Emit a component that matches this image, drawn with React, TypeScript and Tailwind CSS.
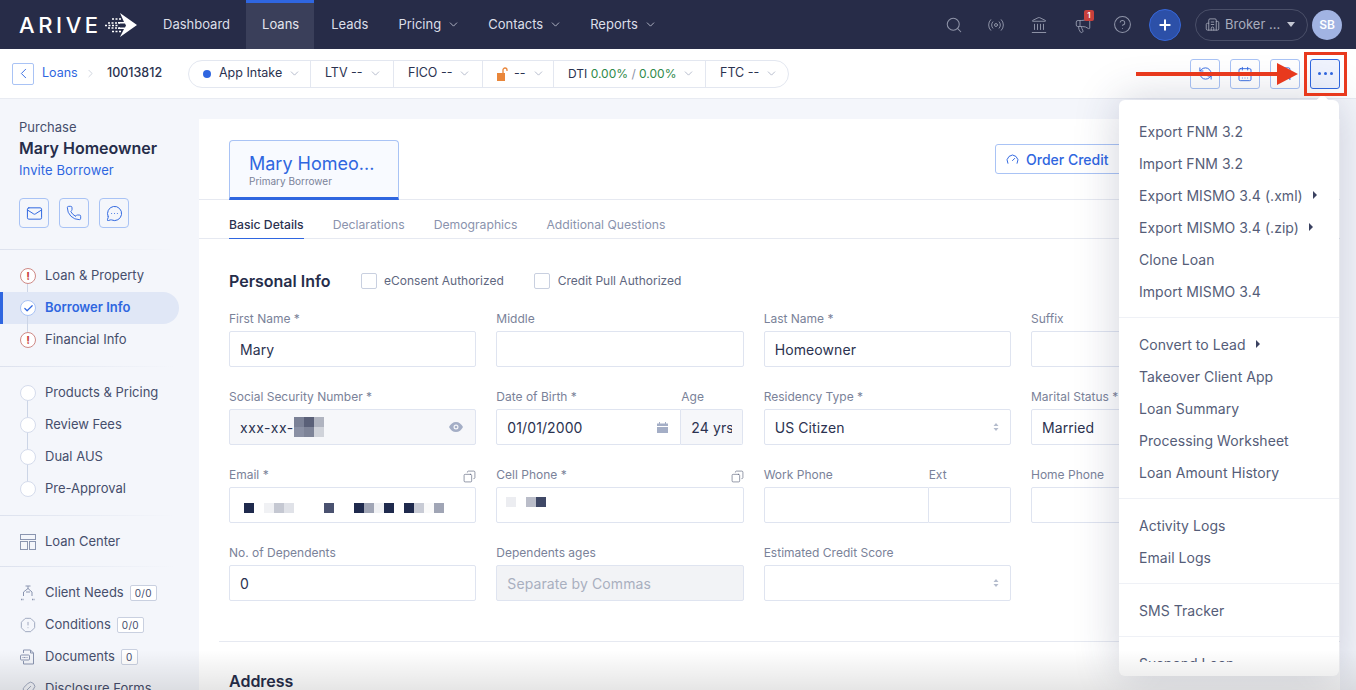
import React from "react";
import {
  Search,
  Radio,
  Landmark,
  Megaphone,
  CircleHelp,
  Plus,
  Building2,
  ChevronDown,
  ChevronLeft,
  ChevronRight,
  Mail,
  Phone,
  MessageCircleMore,
  Check,
  OctagonAlert,
  Feather,
  Copy,
  RefreshCcw,
  Bookmark,
  CalendarDays,
  Gauge,
} from "lucide-react";

const navItems = [
  { label: "Dashboard", cls: "px-[15px] pr-[16px]" },
  { label: "Loans", active: true, cls: "pl-[16px] pr-[15px]" },
  { label: "Leads", cls: "ml-[2px] px-[15px]" },
  { label: "Pricing", menu: true, cls: "pl-[15px] pr-[13px]" },
  { label: "Contacts", menu: true, cls: "pl-[15px] pr-[13px]" },
  { label: "Reports", menu: true, cls: "pl-[15px] pr-[13px]" },
];

const menuGroups = [
  [
    { label: "Export FNM 3.2" },
    { label: "Import FNM 3.2" },
    { label: "Export MISMO 3.4 (.xml)", sub: true },
    { label: "Export MISMO 3.4 (.zip)", sub: true },
    { label: "Clone Loan" },
    { label: "Import MISMO 3.4" },
  ],
  [
    { label: "Convert to Lead", sub: true },
    { label: "Takeover Client App" },
    { label: "Loan Summary" },
    { label: "Processing Worksheet" },
    { label: "Loan Amount History" },
  ],
  [{ label: "Activity Logs" }, { label: "Email Logs" }],
  [{ label: "SMS Tracker" }],
  [{ label: "Suspend Loan" }],
];

const Logo = () => (
  <div className="flex items-center w-[148px] pl-[19px]">
    <span className="text-[22px] font-medium tracking-[3.6px] text-white leading-none">ARIVE</span>
    <svg width="34" height="26" viewBox="0 0 34 26" className="ml-[2px]">
      <path d="M16 1l17 12-17 12 4-8h-6v-1.500h7l1-2-1-2h-7V10h6z" fill="#fff" />
      <path
        d="M8 7h9M4 11h12M1 13.500h14M4 16h12M8 19.500h9"
        stroke="#fff"
        strokeWidth="1.500"
        strokeDasharray="2 1.500"
      />
    </svg>
  </div>
);

const TopBar = () => (
  <header className="flex items-stretch h-[49px] bg-[#272c48] shrink-0">
    <Logo />
    {navItems.map((item) => (
      <div
        key={item.label}
        className={`flex items-center gap-[6px] text-[13px] border-t-[3px] pb-[3px] ${item.cls} ${
          item.active ? "bg-[#3a3f5a] border-[#2f66e0] text-[#e4e6ee]" : "border-transparent text-[#dcdfe8]"
        }`}
      >
        {item.label}
        {item.menu && <ChevronDown size={13} strokeWidth={1.5} className="text-[#c9cdda]" />}
      </div>
    ))}
    <div className="ml-auto flex items-center text-[#8f94a8] pr-[14px]">
      <Search size={18} strokeWidth={1.4} className="mr-[24px]" />
      <Radio size={18} strokeWidth={1.3} className="mr-[25px]" />
      <Landmark size={18} strokeWidth={1.3} className="mr-[26px]" />
      <div className="relative mr-[21px]">
        <Megaphone size={18} strokeWidth={1.3} />
        <span className="absolute -top-[6px] left-[10px] w-[10px] h-[11px] rounded-[2px] bg-[#c8403c] text-white text-[8px] font-semibold leading-[11px] text-center">
          1
        </span>
      </div>
      <CircleHelp size={19} strokeWidth={1.3} className="mr-[17px]" />
      <div className="w-[32px] h-[32px] rounded-full bg-[#2c50a8] border border-[#3767d8] flex items-center justify-center mr-[14px]">
        <Plus size={16} strokeWidth={3} className="text-white" />
      </div>
      <div className="flex items-center w-[113px] h-[32px] rounded-full border border-[#4a4f68] pl-[9px] text-[13px] text-[#a9adbd] mr-[4px]">
        <Building2 size={15} strokeWidth={1.3} className="mr-[5px]" />
        Broker ...
        <span className="ml-[7px] w-0 h-0 border-l-[4px] border-r-[4px] border-t-[5px] border-l-transparent border-r-transparent border-t-[#c4c7d3]" />
      </div>
      <div className="w-[30px] h-[30px] rounded-full bg-[#a1b3e2] flex items-center justify-center text-white text-[12px] font-semibold">
        SB
      </div>
    </div>
  </header>
);

const PillPart = ({ width, last, children }: { width: string; last?: boolean; children: React.ReactNode }) => (
  <div className={`flex items-center gap-[6px] pl-[14px] text-[12.5px] whitespace-nowrap text-[#2b3250] h-full ${width} ${last ? "" : "border-r border-[#e3e7f0]"}`}>
    {children}
    <ChevronDown size={13} strokeWidth={1.3} className="text-[#9aa2b8]" />
  </div>
);

const ActionBtn = ({ active, children }: { active?: boolean; children: React.ReactNode }) => (
  <div
    className={`w-[30px] h-[30px] rounded-[3px] border flex items-center justify-center text-[#2f66e0] ${
      active ? "border-[#2f66e0] bg-[#eff3fe]" : "border-[#a9c3f5] bg-white"
    }`}
  >
    {children}
  </div>
);

const SubBar = () => (
  <div className="flex items-center h-[50px] bg-white border-b border-[#e8ebf2] pl-[12px] pr-[16px] shrink-0">
    <div className="w-[22px] h-[22px] rounded-[2px] border border-[#a9c3f5] flex items-center justify-center text-[#2f66e0]">
      <ChevronLeft size={17} strokeWidth={1.3} />
    </div>
    <span className="ml-[8px] w-[35px] text-[12.5px] text-[#2f66e0]">Loans</span>
    <ChevronRight size={13} strokeWidth={1.2} className="ml-[7px] text-[#b8bfce]" />
    <span className="ml-[10px] w-[55px] whitespace-nowrap text-[12.5px] font-medium text-[#2b3250]">10013812</span>
    <div className="ml-[26px] flex items-center h-[28px] w-[601px] rounded-full border border-[#e3e7f0]">
      <PillPart width="w-[122px]">
        <span className="w-[8px] h-[8px] rounded-full bg-[#2f66e0] mr-[2px]" />
        App Intake
      </PillPart>
      <PillPart width="w-[83px]">LTV --</PillPart>
      <PillPart width="w-[89px]">FICO --</PillPart>
      <PillPart width="w-[71px]">
        <svg width="11" height="14" viewBox="0 0 11 14" fill="none">
          <rect x="0" y="6" width="8" height="8" fill="#e9863a" />
          <path d="M6 6V3a2 2 0 014 0v1" stroke="#e9863a" strokeWidth="1.300" />
        </svg>
        --
      </PillPart>
      <PillPart width="w-[152px]">
        <span className="text-[12px]">
          DTI <span className="text-[#2f8a4a]">0.00%</span> <span className="text-[#8a92a8]">/</span>{" "}
          <span className="text-[#2f8a4a]">0.00%</span>
        </span>
      </PillPart>
      <PillPart width="w-[82px]" last>
        FTC --
      </PillPart>
    </div>
    <div className="ml-auto flex items-center gap-[10px]">
      <ActionBtn>
        <RefreshCcw size={15} strokeWidth={1.5} />
      </ActionBtn>
      <ActionBtn>
        <CalendarDays size={16} strokeWidth={1.4} />
      </ActionBtn>
      <ActionBtn>
        <Bookmark size={15} strokeWidth={1.5} />
      </ActionBtn>
      <ActionBtn active>
        <span className="flex gap-[3px]">
          <i className="w-[3px] h-[3px] rounded-full bg-[#2f66e0]" />
          <i className="w-[3px] h-[3px] rounded-full bg-[#2f66e0]" />
          <i className="w-[3px] h-[3px] rounded-full bg-[#2f66e0]" />
        </span>
      </ActionBtn>
    </div>
  </div>
);

const SideDivider = () => <div className="h-px bg-gradient-to-r from-[#dde2ee] to-transparent w-[175px]" />;

type StepState = "error" | "done" | "empty";

const Step = ({ label, state, active, line }: { label: string; state: StepState; active?: boolean; line?: boolean }) => (
  <div className={`relative flex items-center h-8 w-[179px] ${active ? "bg-[#e0e7f6] rounded-r-full border-l-[3px] border-[#2f66e0] pl-[17px]" : "pl-[20px]"}`}>
    {line && <span className={`absolute top-1/2 h-8 w-px bg-[#ccd5e6] ${active ? "left-[24px]" : "left-[27px]"}`} />}
    <span
      className={`relative z-10 w-[16px] h-[16px] rounded-full border flex items-center justify-center bg-white ${
        state === "error" ? "border-[#cf8a86]" : state === "done" ? "border-[#a9c3f5]" : "border-[#d5dcec]"
      }`}
    >
      {state === "error" && <span className="text-[#c8403c] text-[11px] font-bold leading-none">!</span>}
      {state === "done" && <Check size={11} strokeWidth={2.6} className="text-[#2f66e0]" />}
    </span>
    <span className={`ml-[9px] text-[13px] ${active ? "font-semibold text-[#2f66e0]" : "text-[#464e6c]"}`}>{label}</span>
  </div>
);

const ToolRow = ({ icon, label, badge }: { icon: React.ReactNode; label: string; badge?: string }) => (
  <div className="flex items-center h-8 pl-[20px] text-[#8a95b0]">
    <span className="w-[16px] flex justify-center">{icon}</span>
    <span className="ml-[9px] text-[13px] text-[#464e6c]">{label}</span>
    {badge && (
      <span className="ml-[6px] px-[4px] h-[16px] rounded-[2px] border border-[#c9d0e0] text-[10px] leading-[14px] tracking-[0.3px] text-[#464e6c] bg-white">
        {badge}
      </span>
    )}
  </div>
);

const ContactBtn = ({ children }: { children: React.ReactNode }) => (
  <div className="w-[30px] h-[30px] rounded-[4px] border border-[#a9c3f5] flex items-center justify-center text-[#2f66e0]">
    {children}
  </div>
);

const Sidebar = () => (
  <aside className="w-[199px] shrink-0 pt-[20px]">
    <div className="pl-[19px]">
      <div className="text-[13px] leading-4 text-[#464e6c]">Purchase</div>
      <div className="mt-[2px] text-[16px] leading-[22px] font-semibold text-[#262d4a]">Mary Homeowner</div>
      <div className="mt-[3px] text-[13px] leading-4 tracking-[0.1px] text-[#2f66e0]">Invite Borrower</div>
      <div className="mt-[20px] flex gap-[10px]">
        <ContactBtn>
          <Mail size={17} strokeWidth={1.4} />
        </ContactBtn>
        <ContactBtn>
          <Phone size={16} strokeWidth={1.4} />
        </ContactBtn>
        <ContactBtn>
          <MessageCircleMore size={17} strokeWidth={1.4} />
        </ContactBtn>
      </div>
    </div>
    <div className="mt-[21px] mb-[10px]">
      <SideDivider />
    </div>
    <Step label="Loan & Property" state="error" line />
    <Step label="Borrower Info" state="done" active line />
    <Step label="Financial Info" state="error" />
    <div className="mt-[10px] mb-[10px]">
      <SideDivider />
    </div>
    <Step label="Products & Pricing" state="empty" line />
    <Step label="Review Fees" state="empty" line />
    <Step label="Dual AUS" state="empty" line />
    <Step label="Pre-Approval" state="empty" />
    <div className="mt-[10px] mb-[10px]">
      <SideDivider />
    </div>
    <ToolRow
      label="Loan Center"
      icon={
        <svg width="16" height="16" viewBox="0 0 16 16" fill="none" stroke="currentColor">
          <rect x="0.5" y="0.5" width="15" height="5" />
          <rect x="0.5" y="7.500" width="7" height="8" />
          <rect x="9.500" y="7.500" width="6" height="8" />
        </svg>
      }
    />
    <div className="mt-[8px] mb-[10px]">
      <SideDivider />
    </div>
    <ToolRow
      label="Client Needs"
      badge="0/0"
      icon={
        <svg width="16" height="16" viewBox="0 0 16 16" fill="none" stroke="currentColor">
          <path d="M5.500 1h5M8 1v3" />
          <path d="M8 3.500L12 7v4M8 3.500L3.500 7v4M6 7h4" />
          <path d="M1 14.500h3M12 14.500h3" strokeWidth="1.500" strokeDasharray="1.500 1" />
        </svg>
      }
    />
    <ToolRow label="Conditions" badge="0/0" icon={<OctagonAlert size={16} strokeWidth={1.2} />} />
    <ToolRow
      label="Documents"
      badge="0"
      icon={
        <svg width="16" height="16" viewBox="0 0 16 16" fill="none" stroke="currentColor">
          <path d="M3.500 4V1h7l3 3v11h-10v-3" />
          <path d="M10.500 1v3h3" />
          <rect x="0.500" y="6" width="9" height="5" rx="1" />
          <path d="M2.500 8.500h5" strokeDasharray="1 .5" />
        </svg>
      }
    />
    <ToolRow label="Disclosure Forms" icon={<Feather size={16} strokeWidth={1.2} />} />
  </aside>
);

const inputBox = "h-[36px] rounded-[2px] border border-[#dfe4f0] flex items-center text-[14px] tracking-[0.1px] text-[#2b3250]";

const Field = ({ label, copy, children }: { label?: React.ReactNode; copy?: boolean; children: React.ReactNode }) => (
  <div>
    <div className="flex items-end justify-between h-[18px] mb-[4px] text-[12px] leading-4 text-[#7a8299]">
      <span className="whitespace-nowrap">{label}</span>
      {copy && <Copy size={13} strokeWidth={1.2} className="text-[#5b637c] -scale-x-100" />}
    </div>
    {children}
  </div>
);

const SortArrows = () => (
  <svg width="6" height="10" viewBox="0 0 6 10" className="ml-auto mr-[11px] shrink-0" fill="#b4bccd">
    <path d="M3 1l2.500 3h-5zM3 9L.5 6h5z" />
  </svg>
);

const EyeFill = () => (
  <svg width="14" height="10" viewBox="0 0 14 10" className="ml-auto mr-[12px]" fill="#a4aec6">
    <path fillRule="evenodd" d="M7 0c3 0 5.500 2 7 5-1.500 3-4 5-7 5S1.500 8 0 5c1.500-3 4-5 7-5zm0 2.500a2.500 2.500 0 100 5 2.500 2.500 0 000-5z" />
    <circle cx="7" cy="5" r="1.300" />
  </svg>
);

const CalendarFill = () => (
  <svg width="11" height="11" viewBox="0 0 11 11" className="ml-auto mr-[12px]" fill="#a4aec6">
    <path d="M2 0h1v1.500h5V0h1v1.500h2V4H0V1.500h2zM0 5h11v6H0z" />
  </svg>
);

const Pixels = ({ cells, size = 10 }: { cells: string[]; size?: number }) => (
  <span className="flex">
    {cells.map((c, i) => (
      <span key={i} className="block" style={{ width: size, height: size, backgroundColor: c }} />
    ))}
  </span>
);

const emailCells = [
  "#1f2a4d", "#fff", "#f0f1f4", "#c5c8d2", "#e0e2e8", "#fff", "#fff", "#fff", "#4a5270", "#fff", "#fff",
  "#1f2a4d", "#a0a5b5", "#f0f1f4", "#1f2a4d", "#fff", "#1f2a4d", "#c8cbd5", "#fafafa", "#a0a5b5",
];

const PersonalForm = () => (
  <div className="grid grid-cols-[247.33px_247.33px_247.33px_247.33px] gap-x-[20px] gap-y-[20px] mt-[16px]">
    <Field label="First Name *">
      <div className={`${inputBox} px-[10px]`}>Mary</div>
    </Field>
    <Field label="Middle">
      <div className={inputBox} />
    </Field>
    <Field label="Last Name *">
      <div className={`${inputBox} px-[10px]`}>Homeowner</div>
    </Field>
    <Field label="Suffix">
      <div className={inputBox} />
    </Field>

    <Field label="Social Security Number *">
      <div className={`${inputBox} pl-[10px] bg-[#f6f7fa]`}>
        <span className="tracking-[0.5px]">xxx-xx-</span>
        <span className="flex flex-col">
          <Pixels cells={["#7b8196", "#5a6078", "#b0b4c0"]} />
          <Pixels cells={["#8a90a4", "#7e8498", "#d0d3da"]} />
        </span>
        <EyeFill />
      </div>
    </Field>
    <div className="grid grid-cols-[185px_62px]">
      <Field label="Date of Birth *">
        <div className={`${inputBox} pl-[10px] rounded-r-none`}>
          01/01/2000
          <CalendarFill />
        </div>
      </Field>
      <Field label="Age">
        <div className={`${inputBox} pl-[10px] border-l-0 rounded-l-none bg-[#f6f7fa]`}>
          <span className="w-[41px] overflow-hidden whitespace-nowrap">24 yrs</span>
        </div>
      </Field>
    </div>
    <Field label="Residency Type *">
      <div className={`${inputBox} pl-[10px]`}>
        US Citizen
        <SortArrows />
      </div>
    </Field>
    <Field label="Marital Status *">
      <div className={`${inputBox} pl-[10px]`}>Married</div>
    </Field>

    <Field label="Email *" copy>
      <div className={`${inputBox} pl-[14px] pt-[5px]`}>
        <Pixels cells={emailCells} />
      </div>
    </Field>
    <Field label="Cell Phone *" copy>
      <div className={`${inputBox} pl-[9px] pb-[6px]`}>
        <Pixels cells={["#ecedf1", "#fff", "#babdc9", "#3f4866"]} />
      </div>
    </Field>
    <div className="grid grid-cols-[165px_82px]">
      <Field label="Work Phone">
        <div className={`${inputBox} rounded-r-none`} />
      </Field>
      <Field label="Ext">
        <div className={`${inputBox} border-l-0 rounded-l-none`} />
      </Field>
    </div>
    <Field label="Home Phone">
      <div className={inputBox} />
    </Field>

    <Field label="No. of Dependents">
      <div className={`${inputBox} px-[10px]`}>0</div>
    </Field>
    <Field label="Dependents ages">
      <div className={`${inputBox} px-[10px] bg-[#f2f3f6] text-[#a9afbf]`}>Separate by Commas</div>
    </Field>
    <Field label="Estimated Credit Score">
      <div className={inputBox}>
        <SortArrows />
      </div>
    </Field>
  </div>
);

const MainCard = () => (
  <main className="w-[1141px] mt-[20px] bg-white overflow-hidden">
    <div className="relative h-[81px] border-b border-[#e6e9f1] px-[30px] pt-[21px]">
      <div className="w-[170px] h-[60px] rounded-t-[4px] border border-b-[3px] border-[#a9c3f5] border-b-[#2f66e0] bg-[#f8faff] pl-[19px] pt-[11px]">
        <div className="text-[18px] leading-[23px] text-[#2f66e0]">Mary Homeo...</div>
        <div className="text-[10px] leading-3 text-[#7a8299]">Primary Borrower</div>
      </div>
      <div className="absolute left-[796px] top-[25px] w-[150px] h-[30px] rounded-[3px] border border-[#a9c3f5] flex items-center pl-[10px] text-[14px] font-medium text-[#2f66e0]">
        <Gauge size={13} strokeWidth={1.8} className="mr-[7px]" />
        Order Credit
      </div>
    </div>
    <div className="h-[39px] border-b border-[#e6e9f1] px-[30px] flex gap-[29px] text-[12.2px]">
      <div className="h-[39px] border-b border-[#2f66e0] font-medium text-[#2b3250] pt-[17px] leading-4">Basic Details</div>
      <div className="pt-[17px] leading-4 text-[#8a93ad]">Declarations</div>
      <div className="pt-[17px] leading-4 text-[#8a93ad]">Demographics</div>
      <div className="pt-[17px] leading-4 text-[#8a93ad]">Additional Questions</div>
    </div>
    <section className="px-[30px] pt-[30px]">
      <div className="flex items-center h-[24px]">
        <h2 className="w-[132px] text-[16px] font-semibold text-[#262d4a]">Personal Info</h2>
        <span className="w-[16px] h-[16px] rounded-[2px] border border-[#c9d0e0]" />
        <span className="ml-[7px] text-[12px] text-[#5f6780]">eConsent Authorized</span>
        <span className="ml-[30px] w-[16px] h-[16px] rounded-[2px] border border-[#c9d0e0]" />
        <span className="ml-[8px] text-[12px] text-[#5f6780]">Credit Pull Authorized</span>
      </div>
      <PersonalForm />
    </section>
    <div className="h-px bg-[#e6e9f1] ml-[20px] mt-[40px]" />
    <h2 className="ml-[30px] mt-[27px] text-[16px] leading-6 font-semibold text-[#262d4a]">Address</h2>
  </main>
);

const ActionsMenu = () => (
  <div className="absolute left-[1119px] top-[100px] w-[220px] h-[576px] rounded-[6px] bg-white shadow-[0_0_45px_rgba(40,50,90,0.22)] pt-[15px]">
    <span className="absolute left-[199px] -top-[4px] w-[9px] h-[9px] rotate-45 bg-white" />
    <div className="relative h-[547px] overflow-hidden">
      {menuGroups.map((group, i) => (
        <div key={i} className={`pb-[10px] mb-[10px] border-b border-[#eff1f6] last:border-b-0 ${i === 4 ? "pb-0 mb-0" : ""}`}>
          {group.map((item) => (
            <div key={item.label} className="flex items-center h-8 pl-[20px] text-[14px] tracking-[0.05px] text-[#555d78]">
              {item.label}
              {item.sub && (
                <span className="ml-[10px] w-0 h-0 border-y-[4px] border-l-[4px] border-y-transparent border-l-[#3a4160]" />
              )}
            </div>
          ))}
        </div>
      ))}
    </div>
  </div>
);

const Callout = () => (
  <>
    <div className="absolute left-[1304px] top-[52px] w-[43px] h-[44px] border-[3px] border-[#e8391d]" />
    <svg className="absolute left-[1136px] top-[61px]" width="162" height="26" viewBox="0 0 162 26">
      <path d="M0 11h141V2l21 11-21 11v-9H0z" fill="#e8391d" />
    </svg>
  </>
);

export default function App() {
  return (
    <div className="relative h-[690px] w-[1356px] overflow-hidden bg-[#f4f6fb] font-['Inter',sans-serif] flex flex-col">
      <TopBar />
      <SubBar />
      <div className="flex flex-1 min-h-0">
        <Sidebar />
        <MainCard />
      </div>
      <ActionsMenu />
      <Callout />
      <div className="absolute inset-x-0 bottom-0 h-[40px] bg-gradient-to-t from-black/10 to-transparent pointer-events-none" />
    </div>
  );
}
